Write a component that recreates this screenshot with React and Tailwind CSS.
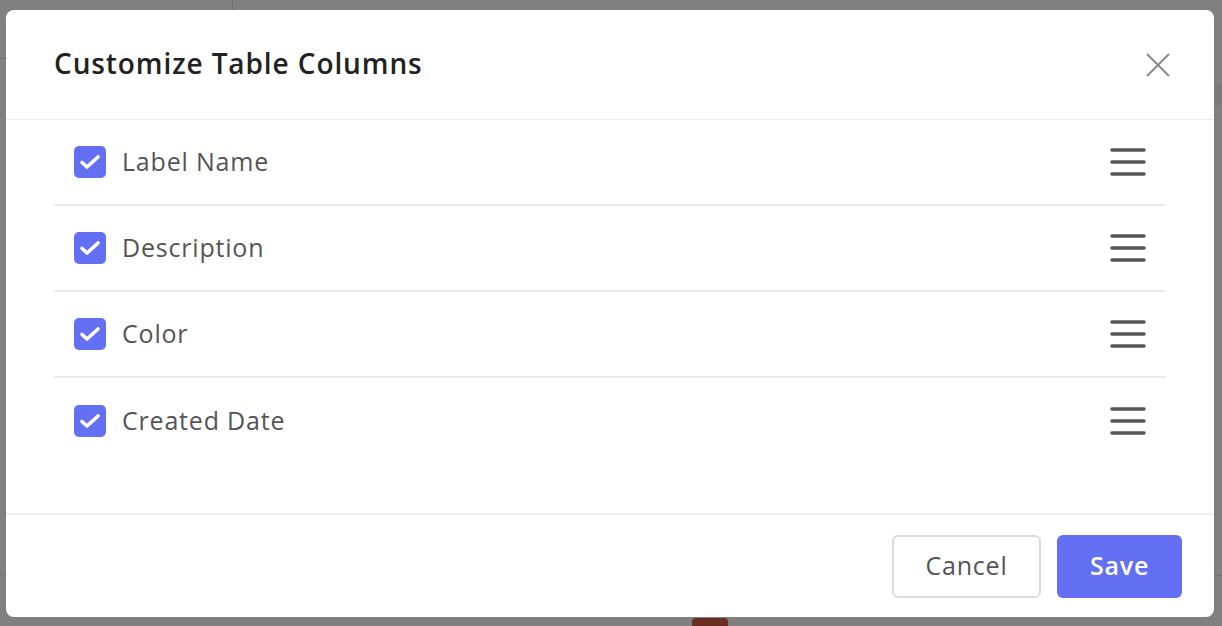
export default function App() {
    const columns = ["Label Name", "Description", "Color", "Created Date"];

    return (
        <div className="relative h-[626px] w-[1222px] overflow-hidden bg-[#808080]" style={{ fontFamily: "'Open Sans', Lato, sans-serif" }}>
            {/* page behind the overlay */}
            <div className="absolute left-[232px] top-0 h-[10px] w-px bg-[#6f6f6f]" />
            <div className="absolute left-0 top-[58px] h-px w-[6px] bg-[#707070]" />
            <div className="absolute right-0 top-[83px] h-[22px] w-[8px] bg-[#7a7a7a]" />
            <div className="absolute left-0 top-[574px] h-px w-[6px] bg-[#737373]" />
            <div className="absolute right-0 top-[575px] h-px w-[8px] bg-[#737373]" />
            <div className="absolute left-[692px] top-[618px] h-[8px] w-[36px] rounded-t-sm bg-[#6a2e22]" />

            {/* modal */}
            <div className="absolute left-[6px] top-[10px] flex h-[607px] w-[1208px] flex-col rounded-lg bg-white">
                <div className="flex h-[110px] shrink-0 items-center justify-between border-b border-[#ececec] pl-[48px] pr-[44px]">
                    <h2 className="-mt-[2px] text-[28px] leading-[1.2] font-semibold tracking-[0.9px] text-[#222]">Customize Table Columns</h2>
                    <button type="button" className="text-[#8a8a8a]">
                        <svg width="24" height="24" viewBox="0 0 24 24" fill="none" stroke="currentColor" strokeWidth="2">
                            <path d="M1 1 L23 23 M23 1 L1 23" />
                        </svg>
                    </button>
                </div>

                <div className="flex-1 px-[48px]">
                    {columns.map((name, i) => (
                        <div
                            key={name}
                            className={`flex h-[86px] items-center justify-between pl-[20px] pr-[20px] ${i < columns.length - 1 ? "border-b-2 border-[#ebebeb]" : ""}`}
                        >
                            <div className="flex items-center gap-[16px]">
                                <span className="flex h-[32px] w-[32px] items-center justify-center rounded-[5px] bg-[#6470f3]">
                                    <svg width="32" height="32" viewBox="0 0 32 32" fill="none" stroke="white" strokeWidth="3.6" strokeLinecap="round" strokeLinejoin="round">
                                        <path d="M8 16.5 L13 21 L24 11" />
                                    </svg>
                                </span>
                                <span className="-mt-[2px] text-[25px] leading-[1.2] tracking-[0.8px] text-[#555]">{name}</span>
                            </div>
                            <svg width="36" height="28" viewBox="0 0 36 28" fill="none" stroke="#555" strokeWidth="3.5" strokeLinecap="round">
                                <path d="M2 2 H34 M2 14 H34 M2 26 H34" />
                            </svg>
                        </div>
                    ))}
                </div>

                <div className="flex h-[104px] shrink-0 items-center justify-end gap-[16px] border-t-2 border-[#efefef] pr-[32px]">
                    <button type="button" className="h-[63px] w-[149px] rounded-[6px] border-2 border-[#dcdcdc] pb-[2px] text-[25px] leading-[1.2] tracking-[0.8px] text-[#555]">
                        Cancel
                    </button>
                    <button type="button" className="h-[63px] w-[125px] rounded-[6px] bg-[#6470f3] pb-[2px] text-[25px] leading-[1.2] font-semibold tracking-[0.8px] text-white">
                        Save
                    </button>
                </div>
            </div>
        </div>
    );
}
